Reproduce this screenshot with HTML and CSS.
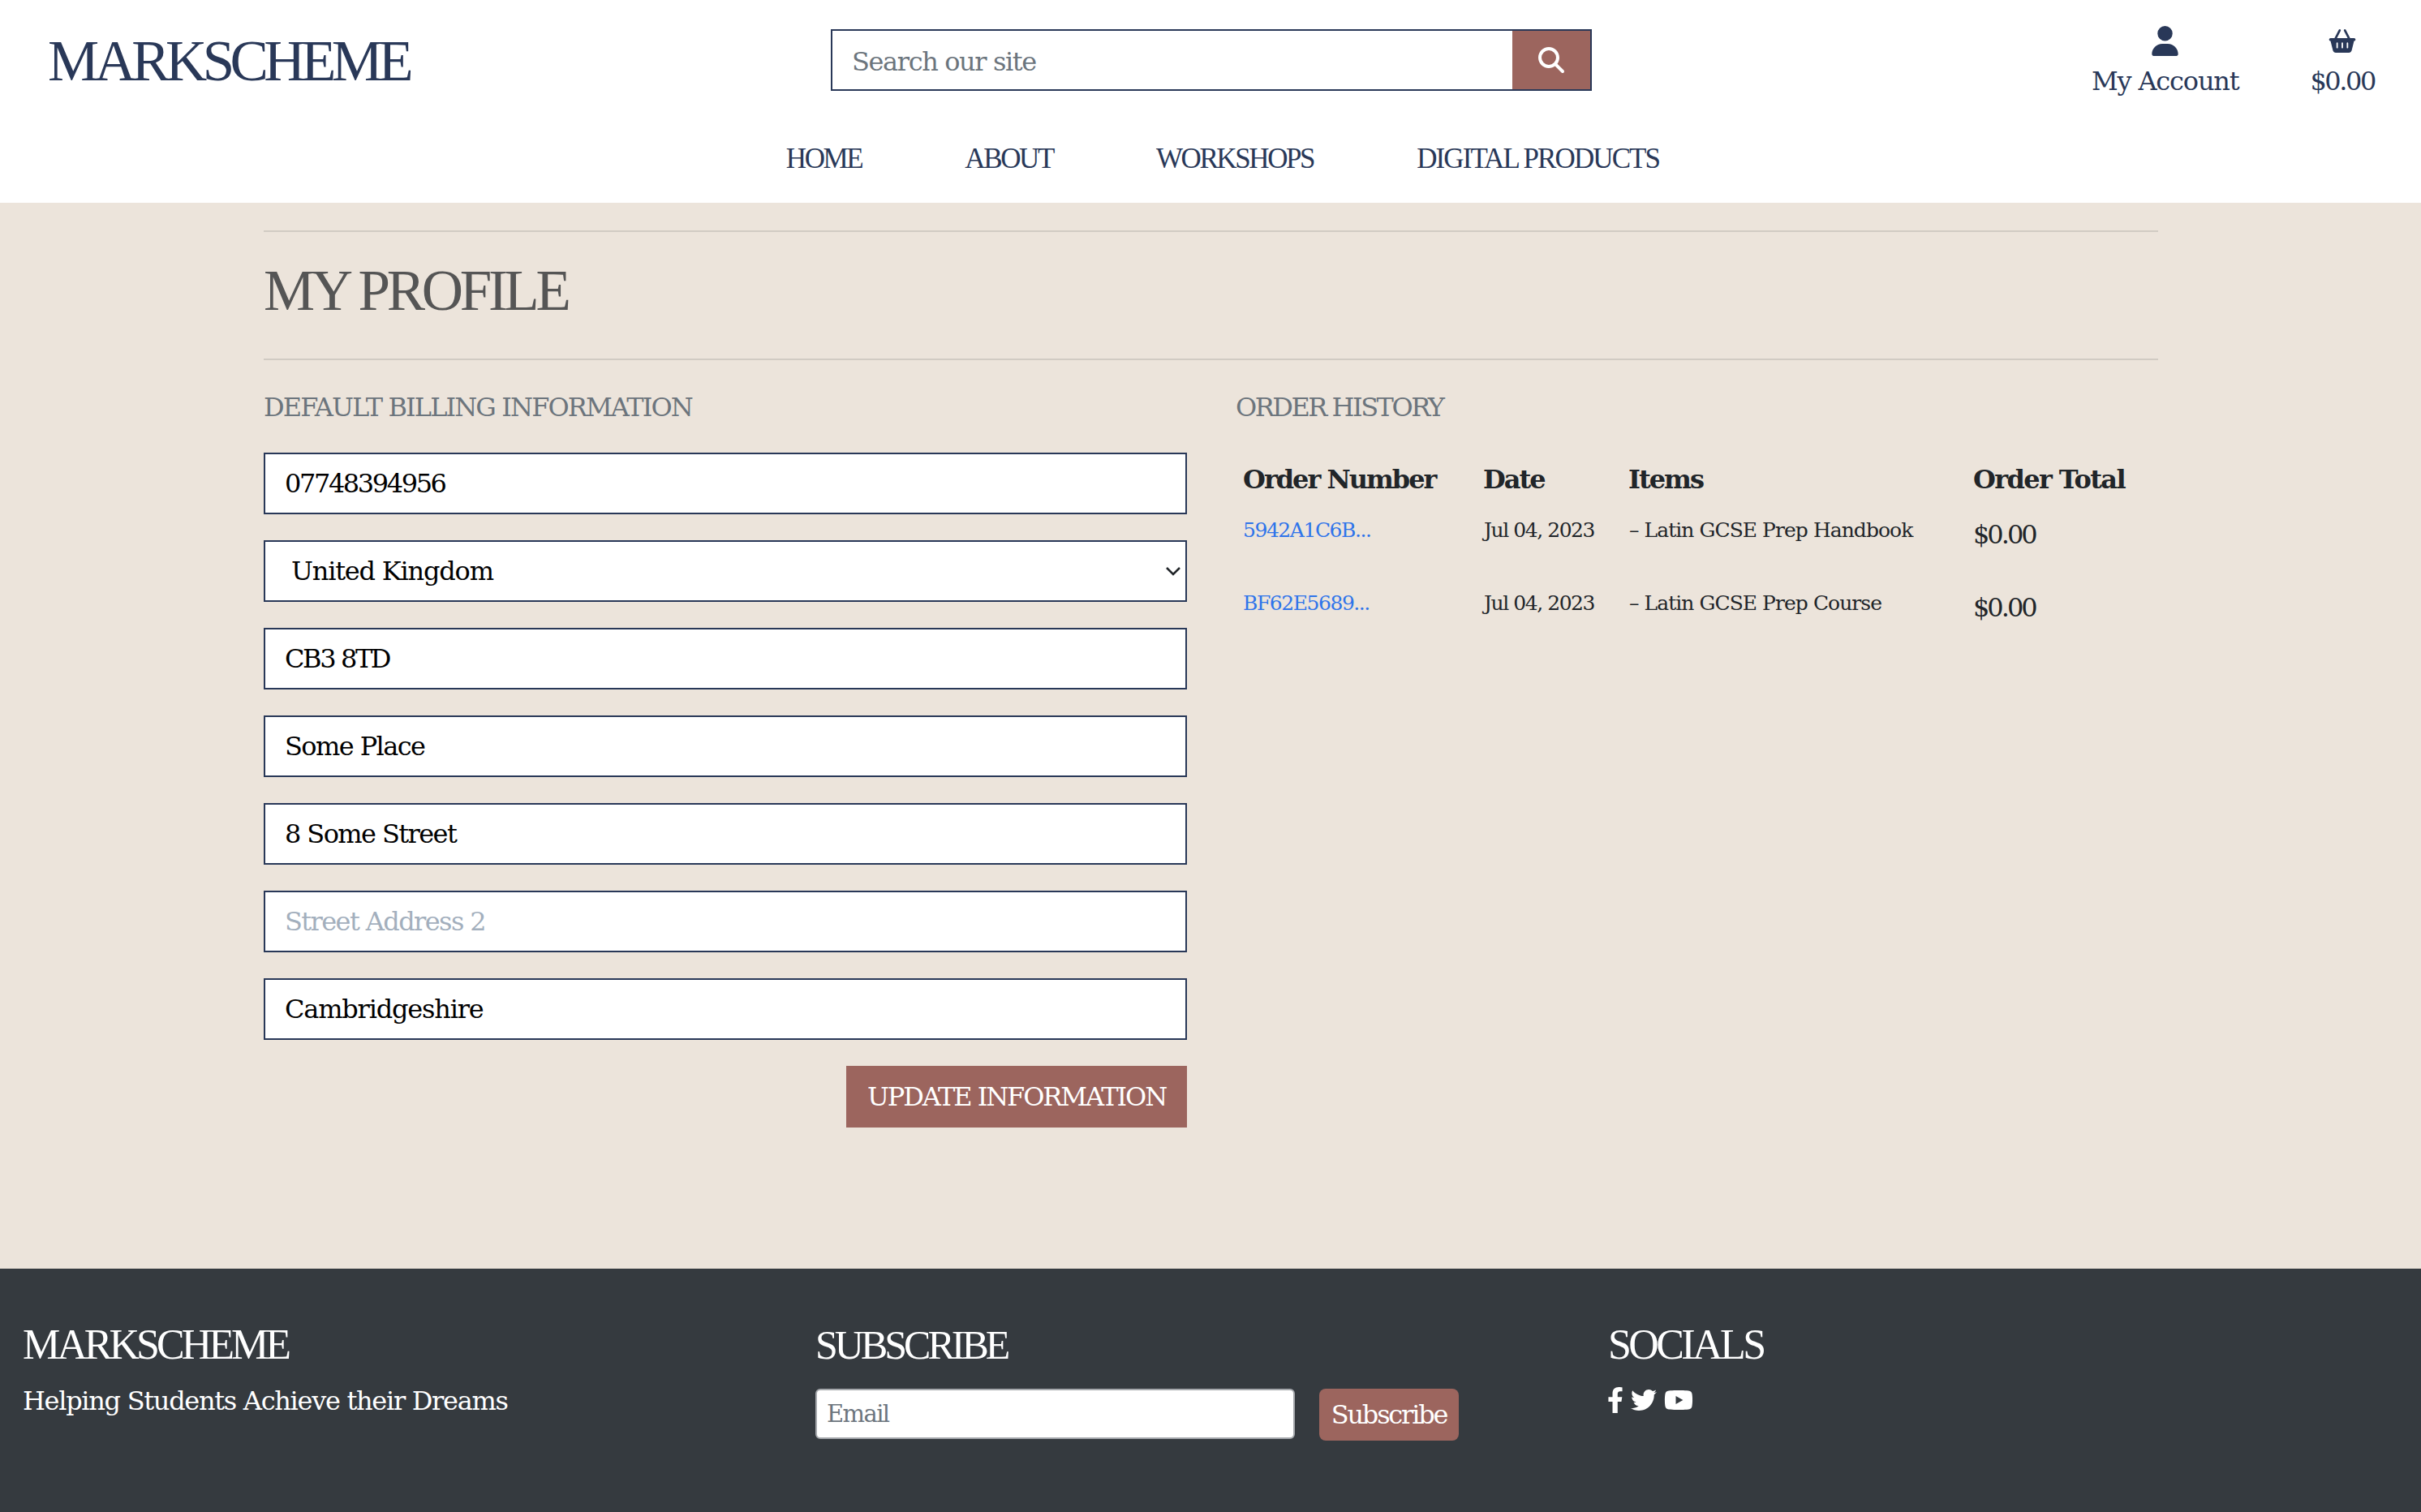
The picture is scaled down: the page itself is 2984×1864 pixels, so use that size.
FILE: index.html
```html
<!DOCTYPE html>
<html lang="en">
  <head>
    <title>My Profile - Markscheme</title>
    <meta charset="utf-8" />
    <link rel="stylesheet" href="styles.css">
  </head>

  <body>
    <header class="site-header">
      <div class="top-row">
        <a class="logo">MARKSCHEME</a>
        <form class="search">
          <input class="search-input" type="text" placeholder="Search our site" />
          <button class="search-btn" type="button" title="Search">
            <svg viewBox="0 0 512 512" width="32" height="32"><path d="M416 208c0 45.9-14.9 88.3-40 122.7L502.6 457.4c12.5 12.5 12.5 32.8 0 45.3s-32.8 12.5-45.3 0L330.7 376c-34.4 25.2-76.8 40-122.7 40C93.1 416 0 322.9 0 208S93.1 0 208 0S416 93.1 416 208zM208 352a144 144 0 1 0 0-288 144 144 0 1 0 0 288z"/></svg>
          </button>
        </form>
        <div class="user-links">
          <a class="user-link account">
            <svg viewBox="0 0 448 512" width="35" height="40"><path d="M224 256A128 128 0 1 0 224 0a128 128 0 1 0 0 256zm-45.7 48C79.8 304 0 383.8 0 482.3C0 498.7 13.3 512 29.7 512H418.3c16.4 0 29.7-13.3 29.7-29.7C448 383.8 368.2 304 269.7 304H178.3z"/></svg>
            <span>My Account</span>
          </a>
          <a class="user-link basket">
            <svg viewBox="0 0 576 512" width="36" height="32"><path d="M253.3 35.1c6.1-11.8 1.5-26.3-10.2-32.4s-26.3-1.5-32.4 10.2L117.6 192H32c-17.7 0-32 14.3-32 32s14.3 32 32 32L83.9 463.5C91 492 116.6 512 146 512H430c29.4 0 55-20 62.1-48.5L544 256c17.7 0 32-14.3 32-32s-14.3-32-32-32H458.4L365.3 12.9C359.2 1.2 344.7-3.4 332.9 2.7s-16.3 20.6-10.2 32.4L404.3 192H171.7L253.3 35.1zM192 304v96c0 8.8-7.2 16-16 16s-16-7.2-16-16V304c0-8.8 7.2-16 16-16s16 7.2 16 16zm96-16c8.8 0 16 7.2 16 16v96c0 8.8-7.2 16-16 16s-16-7.2-16-16V304c0-8.8 7.2-16 16-16zm128 16v96c0 8.8-7.2 16-16 16s-16-7.2-16-16V304c0-8.8 7.2-16 16-16s16 7.2 16 16z"/></svg>
            <span>$0.00</span>
          </a>
        </div>
      </div>
      <nav class="main-nav">
        <a>HOME</a>
        <a>ABOUT</a>
        <a>WORKSHOPS</a>
        <a>DIGITAL PRODUCTS</a>
      </nav>
    </header>

    <main class="page">
      <div class="container">
        <hr class="rule" />
        <h1 class="page-title">MY PROFILE</h1>
        <hr class="rule" />
        <div class="columns">
          <section class="billing">
            <h2 class="section-title">DEFAULT BILLING INFORMATION</h2>
            <form class="billing-form">
              <input class="field tight" type="text" value="07748394956" />
              <div class="select-wrap">
                <select class="field select">
                  <option>United Kingdom</option>
                </select>
                <svg class="chevron" viewBox="0 0 18 11" width="18" height="11"><path d="M1 1l8 8 8-8" /></svg>
              </div>
              <input class="field tight" type="text" value="CB3 8TD" />
              <input class="field" type="text" value="Some Place" />
              <input class="field" type="text" value="8 Some Street" />
              <input class="field" type="text" placeholder="Street Address 2" />
              <input class="field loose" type="text" value="Cambridgeshire" />
              <button class="update-btn" type="button">UPDATE INFORMATION</button>
            </form>
          </section>
          <section class="history">
            <h2 class="section-title">ORDER HISTORY</h2>
            <table class="orders">
              <thead>
                <tr>
                  <th class="col-number">Order Number</th>
                  <th class="col-date">Date</th>
                  <th class="col-items">Items</th>
                  <th class="col-total">Order Total</th>
                </tr>
              </thead>
              <tbody>
                <tr>
                  <td><a class="order-link">5942A1C6B...</a></td>
                  <td>Jul 04, 2023</td>
                  <td class="item">&ndash; Latin GCSE Prep Handbook</td>
                  <td class="total">$0.00</td>
                </tr>
                <tr>
                  <td><a class="order-link">BF62E5689...</a></td>
                  <td>Jul 04, 2023</td>
                  <td class="item">&ndash; Latin GCSE Prep Course</td>
                  <td class="total">$0.00</td>
                </tr>
              </tbody>
            </table>
          </section>
        </div>
      </div>
    </main>

    <footer class="site-footer">
      <div class="footer-col brand">
        <h3 class="footer-title">MARKSCHEME</h3>
        <p class="tagline">Helping Students Achieve their Dreams</p>
      </div>
      <div class="footer-col subscribe">
        <h3 class="footer-title small">SUBSCRIBE</h3>
        <form class="subscribe-form">
          <input class="email" type="email" placeholder="Email" />
          <button class="subscribe-btn" type="button">Subscribe</button>
        </form>
      </div>
      <div class="footer-col socials">
        <h3 class="footer-title">SOCIALS</h3>
        <div class="social-icons">
          <svg viewBox="0 0 320 512" width="20" height="32"><path d="M279.14 288l14.22-92.66h-88.91v-60.13c0-25.35 12.42-50.06 52.24-50.06h40.42V6.26S260.43 0 225.36 0c-73.22 0-121.08 44.38-121.08 124.72v70.62H22.89V288h81.39v224h100.17V288z"/></svg>
          <svg viewBox="0 0 512 512" width="32" height="32"><path d="M459.37 151.716c.325 4.548.325 9.097.325 13.645 0 138.72-105.583 298.558-298.558 298.558-59.452 0-114.68-17.219-161.137-47.106 8.447.974 16.568 1.299 25.34 1.299 49.055 0 94.213-16.568 130.274-44.832-46.132-.975-84.792-31.188-98.112-72.772 6.498.974 12.995 1.624 19.818 1.624 9.421 0 18.843-1.3 27.614-3.573-48.081-9.747-84.143-51.98-84.143-102.985v-1.299c13.969 7.797 30.214 12.67 47.431 13.319-28.264-18.843-46.781-51.005-46.781-87.391 0-19.492 5.197-37.36 14.294-52.954 51.655 63.675 129.3 105.258 216.365 109.807-1.624-7.797-2.599-15.918-2.599-24.04 0-57.828 46.782-104.934 104.934-104.934 30.213 0 57.502 12.67 76.67 33.137 23.715-4.548 46.456-13.32 66.599-25.34-7.798 24.366-24.366 44.833-46.132 57.827 21.117-2.273 41.584-8.122 60.426-16.243-14.292 20.791-32.161 39.308-52.628 54.253z"/></svg>
          <svg viewBox="0 0 576 512" width="36" height="32"><path d="M549.655 124.083c-6.281-23.65-24.787-42.276-48.284-48.597C458.781 64 288 64 288 64S117.22 64 74.629 75.486c-23.497 6.322-42.003 24.947-48.284 48.597-11.412 42.867-11.412 132.305-11.412 132.305s0 89.438 11.412 132.305c6.281 23.65 24.787 41.5 48.284 47.821C117.22 448 288 448 288 448s170.78 0 213.371-11.486c23.497-6.321 42.003-24.171 48.284-47.821 11.412-42.867 11.412-132.305 11.412-132.305s0-89.438-11.412-132.305zm-317.51 213.508V175.185l142.739 81.205-142.739 81.201z"/></svg>
        </div>
      </div>
    </footer>
  </body>
</html>
```

FILE: styles.css
```css
* {
  box-sizing: border-box;
}

body {
  margin: 0;
  width: 2984px;
  height: 1864px;
  overflow: hidden;
  display: flex;
  flex-direction: column;
  font-family: "DejaVu Serif", serif;
  font-size: 32px;
  letter-spacing: -1.6px;
  color: #212529;
  background-color: #ece4db;
}

input,
select,
button {
  font: inherit;
  letter-spacing: inherit;
}

/* header */
.site-header {
  height: 250px;
  flex-shrink: 0;
  background-color: #ffffff;
  color: #293858;
}

.top-row {
  display: grid;
  grid-template-columns: 1024px 938px 1fr;
  height: 150px;
  padding-top: 36px;
}

.logo {
  padding-left: 59px;
  margin-top: -1px;
  font-family: "Liberation Serif", serif;
  font-size: 71px;
  line-height: 80px;
  letter-spacing: -5.6px;
}

.search {
  display: flex;
  height: 76px;
  border: 2px solid #293858;
}

.search-input {
  flex: 1;
  min-width: 0;
  border: 0;
  outline: 0;
  padding: 3px 24px 0;
  letter-spacing: -1.4px;
}

.search-input::placeholder {
  color: #6c757d;
  opacity: 1;
}

.search-btn {
  width: 96px;
  border: 0;
  padding: 0;
  display: flex;
  align-items: center;
  justify-content: center;
  background-color: #9c655e;
}

.search-btn svg {
  fill: #ffffff;
}

.user-links {
  display: flex;
  justify-content: flex-end;
  gap: 88px;
  padding-right: 57px;
  margin-top: -4px;
}

.user-link {
  display: flex;
  flex-direction: column;
  align-items: center;
  height: 90px;
  line-height: 44px;
}

.user-link svg {
  fill: #293858;
  height: 40px;
  margin-bottom: 9px;
}

.account {
  letter-spacing: -1.2px;
}

.basket {
  letter-spacing: -2.4px;
}

.basket svg {
  height: 32px;
  margin-top: 4px;
  margin-bottom: 13px;
}

.main-nav {
  display: flex;
  justify-content: center;
  gap: 127px;
  padding-left: 30px;
  font-family: "Liberation Serif", serif;
  font-size: 35px;
  line-height: 44px;
  letter-spacing: -2.4px;
  margin-top: 24px;
}

.main-nav a:last-child {
  letter-spacing: -1.9px;
}

/* main */
.page {
  flex: 1;
}

.container {
  width: 2335px;
  margin-left: 325px;
  padding-top: 34px;
}

.rule {
  margin: 0;
  border: 0;
  height: 2px;
  background-color: #d1cbc3;
}

.page-title {
  margin: 0;
  height: 156px;
  font-family: "Liberation Serif", serif;
  font-size: 71px;
  line-height: 144px;
  font-weight: 400;
  letter-spacing: -4.3px;
  color: #555555;
}

.columns {
  display: grid;
  grid-template-columns: 1138px 1fr;
  column-gap: 60px;
}

.section-title {
  margin: 0;
  height: 114px;
  padding-top: 36px;
  font-size: 32px;
  line-height: 44px;
  font-weight: 400;
  letter-spacing: -1.9px;
  color: #6c757d;
}

.history .section-title {
  letter-spacing: -2.5px;
}

.billing-form {
  display: flex;
  flex-direction: column;
  gap: 32px;
}

.field {
  display: block;
  width: 100%;
  height: 76px;
  border: 2px solid #293858;
  border-radius: 0;
  outline: 0;
  padding: 0 24px;
  background-color: #ffffff;
  color: #000000;
}

.field.tight {
  letter-spacing: -2.4px;
}

.field.loose {
  letter-spacing: -1.2px;
}

.field::placeholder {
  color: #a3afbd;
  opacity: 1;
}

.select-wrap {
  position: relative;
}

.select {
  appearance: none;
  padding-left: 32px;
  letter-spacing: -1.2px;
}

.chevron {
  position: absolute;
  right: 8px;
  top: 33px;
  fill: none;
  stroke: #212529;
  stroke-width: 2.5;
}

.update-btn {
  align-self: flex-end;
  width: 420px;
  height: 76px;
  border: 0;
  padding: 0;
  background-color: #9c655e;
  color: #ffffff;
  letter-spacing: -2.1px;
}

.orders {
  border-collapse: collapse;
  table-layout: fixed;
  width: 1137px;
  margin-top: -10px;
}

.orders th {
  height: 86px;
  padding: 0 9px;
  font-size: 32px;
  text-align: left;
  letter-spacing: -2px;
  vertical-align: middle;
}

.orders th.col-total {
  letter-spacing: -1.6px;
  padding-left: 10px;
}

.col-number {
  width: 296px;
}

.col-date {
  width: 179px;
}

.col-items {
  width: 424px;
}

.orders td {
  height: 89.5px;
  padding: 2px 10px 0;
  vertical-align: top;
  font-size: 25px;
  letter-spacing: -1.45px;
  line-height: 36px;
}

.orders td.item {
  letter-spacing: -0.95px;
}

.orders td.total {
  padding-top: 7px;
  font-size: 32px;
  letter-spacing: -3px;
}

.order-link {
  color: #2f74ea;
  margin-left: -1px;
}

/* footer */
.site-footer {
  height: 300px;
  flex-shrink: 0;
  display: flex;
  padding-top: 64px;
  background-color: #353a3f;
  color: #ffffff;
}

.brand {
  width: 1005px;
  padding-left: 28px;
}

.brand .footer-title {
  letter-spacing: -4px;
}

.subscribe {
  width: 977px;
}

.footer-title {
  margin: 0;
  height: 60px;
  font-family: "Liberation Serif", serif;
  font-size: 52px;
  line-height: 60px;
  font-weight: 400;
  letter-spacing: -3.6px;
}

.footer-title.small {
  font-size: 50px;
  letter-spacing: -4px;
}

.tagline {
  margin: 14px 0 0;
  line-height: 50px;
  letter-spacing: -1.3px;
}

.subscribe-form {
  display: flex;
  gap: 30px;
  margin-top: 24px;
}

.email {
  width: 591px;
  height: 62px;
  border: 2px solid #a6a9ad;
  border-radius: 6px;
  outline: 0;
  padding: 0 12px;
  font-size: 29px;
}

.email::placeholder {
  color: #6c757d;
  opacity: 1;
}

.subscribe-btn {
  width: 172px;
  height: 64px;
  border: 0;
  border-radius: 8px;
  padding: 0;
  background-color: #9c655e;
  color: #ffffff;
  letter-spacing: -2.2px;
}

.social-icons {
  display: flex;
  gap: 9px;
  margin-top: 22px;
  margin-left: -1px;
}

.social-icons svg {
  fill: #ffffff;
}
```
